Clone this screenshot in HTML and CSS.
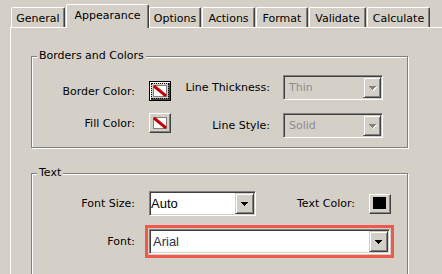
FILE: index.html
```html
<!DOCTYPE html>
<html>
<head>
<meta charset="utf-8">
<link rel="stylesheet" href="styles.css">
</head>
<body>
<div class="dialog">
  <div class="tabs">
    <div class="tab t-general">General</div>
    <div class="tab sel t-appearance">Appearance</div>
    <div class="tab t-options">Options</div>
    <div class="tab t-actions">Actions</div>
    <div class="tab t-format">Format</div>
    <div class="tab t-validate">Validate</div>
    <div class="tab t-calculate">Calculate</div>
  </div>
  <div class="panel">
    <div class="group g-borders">
      <div class="legend">Borders and Colors</div>
      <div class="gbody">
        <div class="col col-left">
          <span class="lbl">Border Color:</span>
          <button class="cbtn focused"><span class="focus-ring"><svg class="nocolor" width="14" height="12" viewBox="0 0 14 12"><rect x="0.5" y="0.5" width="13" height="11" fill="#fff" stroke="#808080"/><line x1="1" y1="1" x2="13" y2="11" stroke="#c40000" stroke-width="3"/></svg></span></button>
          <span class="lbl">Fill Color:</span>
          <button class="cbtn"><svg class="nocolor" width="14" height="12" viewBox="0 0 14 12"><rect x="0.5" y="0.5" width="13" height="11" fill="#fff" stroke="#808080"/><line x1="1" y1="1" x2="13" y2="11" stroke="#c40000" stroke-width="3"/></svg></button>
        </div>
        <div class="col col-right">
          <span class="lbl">Line Thickness:</span>
          <div class="combo disabled">
            <span class="val">Thin</span>
            <span class="arrow"><svg width="8" height="5" viewBox="0 0 8 5"><g fill="#fff"><rect x="1" y="1" width="7" height="1"/><rect x="2" y="2" width="5" height="1"/><rect x="3" y="3" width="3" height="1"/><rect x="4" y="4" width="1" height="1"/></g><g fill="#808080"><rect x="0" y="0" width="7" height="1"/><rect x="1" y="1" width="5" height="1"/><rect x="2" y="2" width="3" height="1"/><rect x="3" y="3" width="1" height="1"/></g></svg></span>
          </div>
          <span class="lbl">Line Style:</span>
          <div class="combo disabled">
            <span class="val">Solid</span>
            <span class="arrow"><svg width="8" height="5" viewBox="0 0 8 5"><g fill="#fff"><rect x="1" y="1" width="7" height="1"/><rect x="2" y="2" width="5" height="1"/><rect x="3" y="3" width="3" height="1"/><rect x="4" y="4" width="1" height="1"/></g><g fill="#808080"><rect x="0" y="0" width="7" height="1"/><rect x="1" y="1" width="5" height="1"/><rect x="2" y="2" width="3" height="1"/><rect x="3" y="3" width="1" height="1"/></g></svg></span>
          </div>
        </div>
      </div>
    </div>
    <div class="group g-text">
      <div class="legend">Text</div>
      <div class="tbody">
        <span class="lbl">Font Size:</span>
        <div class="combo c-size">
          <span class="val v-auto">Auto</span>
          <span class="arrow"><svg width="7" height="4" viewBox="0 0 7 4"><g fill="#000"><rect x="0" y="0" width="7" height="1"/><rect x="1" y="1" width="5" height="1"/><rect x="2" y="2" width="3" height="1"/><rect x="3" y="3" width="1" height="1"/></g></svg></span>
        </div>
        <span class="lbl lbl-tc">Text Color:</span>
        <button class="cbtn tc"><span class="swatch"></span></button>
        <span class="lbl">Font:</span>
        <div class="highlight">
          <div class="combo c-font">
            <span class="val v-arial">Arial</span>
            <span class="arrow"><svg width="7" height="4" viewBox="0 0 7 4"><g fill="#000"><rect x="0" y="0" width="7" height="1"/><rect x="1" y="1" width="5" height="1"/><rect x="2" y="2" width="3" height="1"/><rect x="3" y="3" width="1" height="1"/></g></svg></span>
          </div>
        </div>
      </div>
    </div>
  </div>
</div>
</body>
</html>
```

FILE: styles.css
```css
* { box-sizing: border-box; }
html, body {
  margin: 0;
  padding: 0;
  background: #d4d0c8;
  width: 442px;
  height: 274px;
  overflow: hidden;
}
body {
  font-family: "DejaVu Sans", sans-serif;
  font-size: 11px;
  color: #000;
}
.dialog {
  padding-top: 4px;
  height: 274px;
  overflow: hidden;
}
.tabs {
  display: flex;
  align-items: flex-end;
  height: 23px;
  margin-left: 11px;
  position: relative;
  z-index: 1;
}
.tab {
  height: 20px;
  border-top: 1px solid #fff;
  border-left: 1px solid #fff;
  border-right: 1px solid #404040;
  box-shadow: inset -1px 0 #808080;
  border-radius: 2px 2px 0 0;
  display: flex;
  align-items: center;
  justify-content: center;
  padding-top: 1px;
  white-space: nowrap;
  flex: none;
}
.tab.sel {
  height: 24px;
  margin-bottom: -1px;
  background: #d4d0c8;
  padding-top: 0;
  padding-bottom: 2px;
}
.t-general { width: 54px; }
.t-appearance { width: 83px; margin-left: 1px; }
.t-options { width: 52px; }
.t-actions { width: 53px; margin-left: 1px; }
.t-format { width: 52px; margin-left: 1px; }
.t-validate { width: 57px; margin-left: 1px; }
.t-calculate { width: 63px; margin-left: 1px; }

.panel {
  margin-left: 10px;
  border-left: 1px solid #fff;
  border-top: 1px solid #fff;
  height: 247px;
  padding-left: 20px;
  padding-top: 28px;
  overflow: hidden;
}
.group {
  position: relative;
  width: 377px;
  border: 1px solid #808080;
  box-shadow: 1px 1px 0 #fff, inset 1px 1px 0 #fff;
}
.g-borders { height: 92px; }
.g-text { height: 110px; margin-top: 25px; }
.legend {
  position: absolute;
  top: -8px;
  left: 5px;
  padding: 0 2px;
  background: #d4d0c8;
  line-height: 13px;
  white-space: nowrap;
}
.gbody {
  display: flex;
  align-items: flex-start;
}
.lbl {
  text-align: right;
  white-space: nowrap;
  align-self: center;
}
.col-left {
  display: grid;
  grid-template-columns: 117px 22px;
  grid-auto-rows: 20px;
  row-gap: 12px;
  padding-top: 24px;
}
.col-left .lbl { padding-right: 14px; }
.col-right {
  display: grid;
  grid-template-columns: 112px 100px;
  grid-auto-rows: 25px;
  row-gap: 13px;
  padding-top: 18px;
}
.col-right .lbl { padding-right: 13px; }

.cbtn {
  width: 22px;
  height: 20px;
  margin: 0;
  padding: 0;
  background: #d4d0c8;
  border: 1px solid;
  border-color: #fff #404040 #404040 #fff;
  box-shadow: inset -1px -1px 0 #808080;
  display: flex;
  align-items: center;
  justify-content: center;
  font: inherit;
}
.cbtn.focused {
  border-color: #000;
  box-shadow: inset 1px 1px 0 #fff, inset -1px -1px 0 #404040, inset -2px -2px 0 #808080;
}
.focus-ring {
  display: flex;
  align-items: center;
  justify-content: center;
  width: 18px;
  height: 16px;
  border: 1px dotted #000;
  margin: 0 1px 1px 0;
}
.nocolor { display: block; }

.combo {
  height: 25px;
  display: flex;
  border: 1px solid;
  border-color: #808080 #fff #fff #808080;
  box-shadow: inset 1px 1px 0 #404040, inset -1px -1px 0 #d4d0c8;
  padding: 1px;
  background: #fff;
}
.combo .val {
  flex: 1;
  display: flex;
  align-items: center;
  white-space: nowrap;
  overflow: hidden;
}
.combo .arrow {
  flex: none;
  width: 19px;
  background: #d4d0c8;
  border: 1px solid;
  border-color: #d4d0c8 #404040 #404040 #d4d0c8;
  box-shadow: inset 1px 1px 0 #fff, inset -1px -1px 0 #808080;
  display: flex;
  align-items: center;
  justify-content: center;
}
.combo .arrow svg { display: block; }
.combo.disabled { background: #d4d0c8; }
.combo.disabled .val { color: #8c8c8c; padding-left: 4px; }
.combo.disabled .arrow { width: 18px; }
.combo.disabled .arrow svg { margin: 1px 0 0 1px; }

.tbody {
  display: grid;
  grid-template-columns: 117px 107px 113px 22px;
  grid-template-rows: 25px 33px;
  row-gap: 9px;
  padding-top: 17px;
}
.tbody .lbl { padding-right: 14px; }
.v-auto {
  font-family: "Liberation Sans", Arial, sans-serif;
  font-size: 13px;
  padding-left: 0;
}
.v-arial {
  font-family: "Liberation Sans", Arial, sans-serif;
  font-size: 13px;
  color: #2e3444;
  padding-left: 2px;
}
.cbtn.tc { align-self: center; }
.swatch {
  display: block;
  width: 13px;
  height: 12px;
  background: #000;
  margin: 0 1px 1px 0;
}
.highlight {
  grid-column: 2 / span 3;
  margin-left: -4px;
  width: 249px;
  border: 3px solid #f0584c;
  padding: 1px;
}
.c-font { width: 241px; }
```
